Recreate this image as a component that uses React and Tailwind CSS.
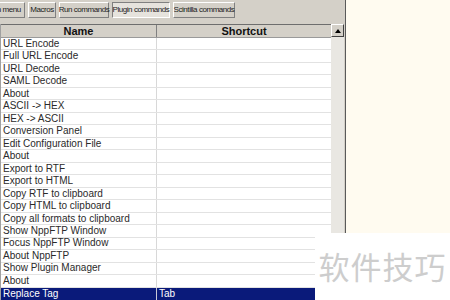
import React from "react";

const tabs = [
  { label: "Main menu", w: "w-[44px]" },
  { label: "Macros", w: "w-[28px]" },
  { label: "Run commands", w: "w-[50px]" },
  { label: "Plugin commands", w: "w-[58px]" },
  { label: "Scintilla commands", w: "w-[62px]" },
];

const rows = [
  "URL Encode",
  "Full URL Encode",
  "URL Decode",
  "SAML Decode",
  "About",
  "ASCII -> HEX",
  "HEX -> ASCII",
  "Conversion Panel",
  "Edit Configuration File",
  "About",
  "Export to RTF",
  "Export to HTML",
  "Copy RTF to clipboard",
  "Copy HTML to clipboard",
  "Copy all formats to clipboard",
  "Show NppFTP Window",
  "Focus NppFTP Window",
  "About NppFTP",
  "Show Plugin Manager",
  "About",
];

const App = () => {
  return (
    <div
      className="relative w-[450px] h-[300px] overflow-hidden flex bg-[#fffbf0]"
      style={{ fontFamily: '"Liberation Sans", Arial, sans-serif' }}
    >
      <div className="w-[346px] h-full bg-[#d4d0c8] border-r border-[#5a5a5a] flex flex-col shrink-0">
        {/* tab strip */}
        <div className="h-[24px] flex items-start pt-[2px] gap-[3px] ml-[-19px]">
          {tabs.map((t) => {
            const active = t.label === "Plugin commands";
            return (
              <div
                key={t.label}
                className={
                  active
                    ? `${t.w} shrink-0 h-[16px] flex items-center justify-center text-[8px] tracking-[-0.45px] text-[#222] bg-[#e6e3dd] border border-t-[#808080] border-l-[#808080] border-r-white border-b-white whitespace-nowrap`
                    : `${t.w} shrink-0 h-[16px] flex items-center justify-center text-[8px] tracking-[-0.45px] text-[#222] border border-t-white border-l-white border-r-[#808080] border-b-[#808080] whitespace-nowrap`
                }
              >
                {t.label}
              </div>
            );
          })}
        </div>

        {/* table */}
        <div className="flex w-[344px] flex-1 overflow-hidden">
          <div className="w-[331px] flex flex-col bg-white border-l border-[#a0a0a0]">
            <div className="h-[14px] flex border-t border-[#6e6e6e] border-b border-b-[#9a9a9a] bg-[#d4d0c8] text-[11px] font-bold text-[#111]">
              <div className="w-[156px] flex items-center justify-center border-r border-[#808080]">Name</div>
              <div className="flex-1 flex items-center justify-center">Shortcut</div>
            </div>
            {rows.map((r, i) => (
              <div key={i} className="h-[12.6px] flex border-b border-[#e2e2e2] text-[10px] text-[#2a2a2a] leading-none">
                <div className="w-[156px] flex items-center pl-[2px] border-r border-[#d8d8d8] whitespace-nowrap">{r}</div>
                <div className="flex-1" />
              </div>
            ))}
            <div className="h-[12.6px] flex bg-[#0a1a7a] text-[10px] text-white leading-none">
              <div className="w-[156px] flex items-center pl-[2px] border-r border-[#c8c8d8] whitespace-nowrap">Replace Tag</div>
              <div className="flex-1 flex items-center pl-[2px]">Tab</div>
            </div>
          </div>
          <div className="w-[13px] bg-[#e9e7e2] flex flex-col">
            <div className="h-[13px] flex items-center justify-center bg-[#d4d0c8] border border-t-white border-l-white border-r-[#404040] border-b-[#404040]">
              <svg width="6" height="4" viewBox="0 0 6 4">
                <path d="M3 0 L6 4 L0 4 Z" fill="#000" />
              </svg>
            </div>
          </div>
        </div>
      </div>

      {/* watermark */}
      <div className="absolute left-[315px] top-[233px] w-[135px] h-[67px] bg-white flex items-center justify-center">
        <span
          className="text-[31px] text-[#cdcdcd] tracking-[1px]"
          style={{ fontFamily: '"Noto Sans CJK SC", sans-serif' }}
        >
          软件技巧
        </span>
      </div>
    </div>
  );
};

export default App;
